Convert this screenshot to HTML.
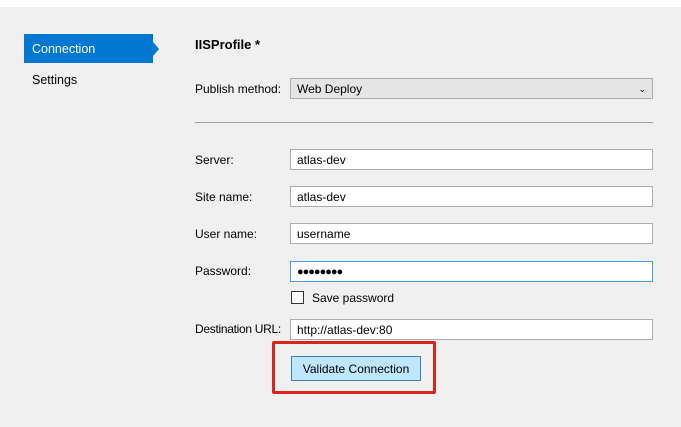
<!DOCTYPE html><html><head><style>
body{margin:0;width:681px;height:427px;background:#f0f0f0;font-family:"Liberation Sans",sans-serif;font-size:12px;color:#000;position:relative;overflow:hidden}
.a{position:absolute}
.inp{position:absolute;left:290px;background:#fff;border:1px solid #adadad;line-height:21px;padding-left:6px;box-sizing:border-box;width:363px;height:21px}
.lb{position:absolute;left:195px}
</style></head><body>
<div class="a" style="left:0;top:0;width:681px;height:7px;background:#fff"></div>
<div class="a" style="left:24px;top:34px;width:129px;height:29px;background:#0078d2;color:#fff;line-height:30px;padding-left:8px;box-sizing:border-box;font-size:12.5px">Connection</div>
<div class="a" style="left:153px;top:42px;width:0;height:0;border-top:7px solid transparent;border-bottom:7px solid transparent;border-left:6px solid #0078d2"></div>
<div class="a" style="left:32px;top:73px;font-size:12.5px">Settings</div>
<div class="a" style="left:195px;top:37px;font-weight:bold;font-size:13px">IISProfile *</div>
<div class="lb" style="top:82px">Publish method:</div>
<div class="inp" style="top:78px;background:#e5e5e5;border-color:#acacac">Web Deploy<span class="a" style="right:6px;top:0;font-size:9px">&#8964;</span></div>
<div class="a" style="left:195px;top:122px;width:458px;height:1px;background:#a0a0a0"></div>
<div class="lb" style="top:153px">Server:</div><div class="inp" style="top:149px">atlas-dev</div>
<div class="lb" style="top:190px">Site name:</div><div class="inp" style="top:186px">atlas-dev</div>
<div class="lb" style="top:227px">User name:</div><div class="inp" style="top:223px">username</div>
<div class="lb" style="top:264px">Password:</div><div class="inp" style="top:261px;border-color:#4d9be0;font-size:11px;letter-spacing:-1px">●●●●●●●●</div>
<div class="a" style="left:291px;top:291px;width:13px;height:13px;border:1px solid #333;background:#fff;box-sizing:border-box"></div>
<div class="a" style="left:312px;top:291px">Save password</div>
<div class="lb" style="top:322px;letter-spacing:-0.3px">Destination URL:</div><div class="inp" style="top:319px">http://atlas-dev:80</div>
<div class="a" style="left:272px;top:341px;width:164px;height:53px;border:3px solid #d9261c;box-sizing:border-box;border-radius:2px"></div>
<div class="a" style="left:291px;top:356px;width:130px;height:25px;background:#bee6fd;border:1px solid #3c7fb1;box-sizing:border-box;text-align:center;line-height:25px">Validate Connection</div>
</body></html>
